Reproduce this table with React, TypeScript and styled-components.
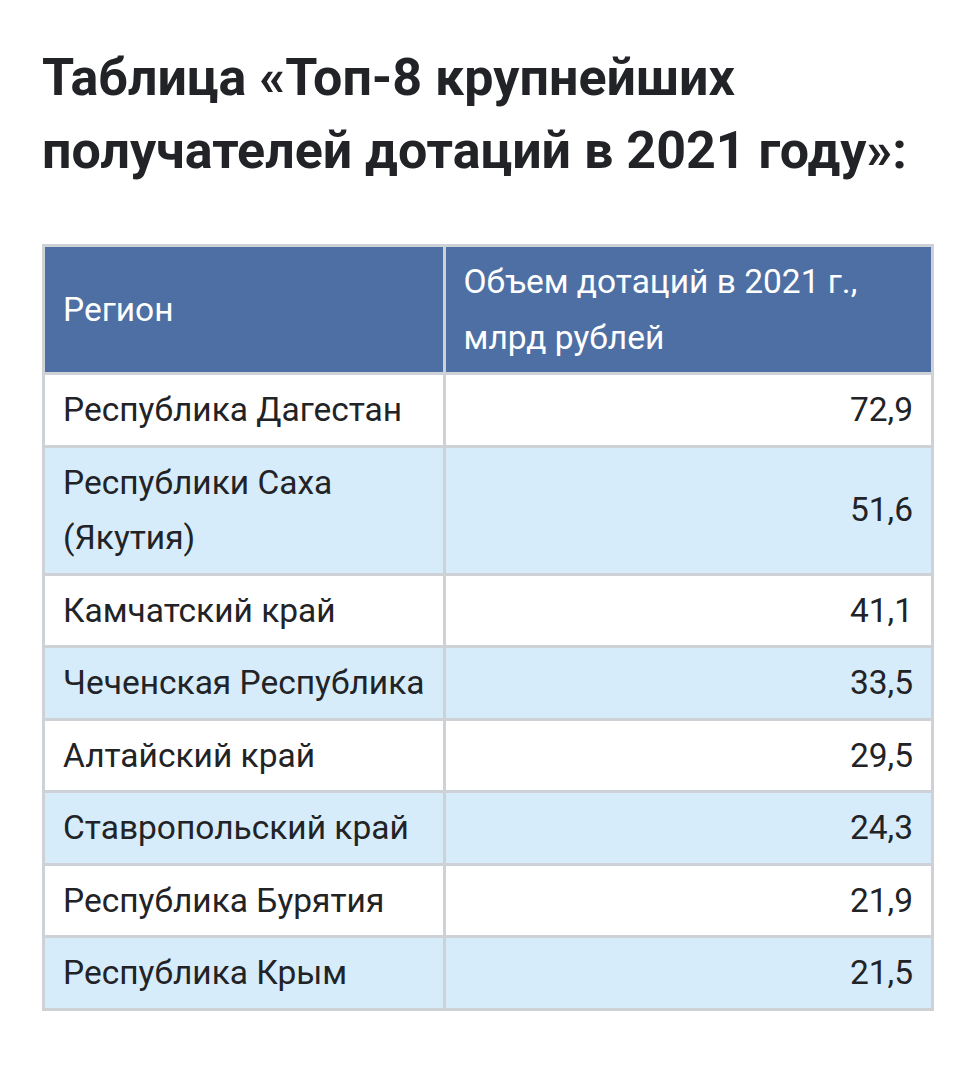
import React from "react";
import styled, { createGlobalStyle } from "styled-components";

const Global = createGlobalStyle`
  html, body { margin: 0; padding: 0; background: #ffffff; }
  body { font-family: Roboto, "Liberation Sans", sans-serif; color: #212121; }
`;

const Page = styled.main`
  padding: 41px 21px 40px 42px;
`;

const Title = styled.h1`
  margin: 0 0 57px 0;
  font-family: Roboto, "Liberation Sans", sans-serif;
  font-weight: 700;
  font-size: 52px;
  line-height: 73px;
  color: #222326;
`;

const Table = styled.table`
  width: 100%;
  border-collapse: collapse;
  border: 3px solid #ced2d7;
  font-size: 33.5px;
  line-height: 55.5px;
`;

const HeadCell = styled.th<{ $w?: string }>`
  background: #4e6fa4;
  color: #ffffff;
  font-weight: 400;
  text-align: left;
  padding: 7px 18px;
  border: 3px solid #ced2d7;
  width: ${(p) => p.$w || "auto"};
  vertical-align: middle;
`;

const Row = styled.tr<{ $striped: boolean }>`
  background: ${(p) => (p.$striped ? "#d6ecfb" : "#ffffff")};
`;

const Cell = styled.td<{ $right?: boolean }>`
  padding: 7px 18px;
  border: 3px solid #ced2d7;
  color: #222326;
  white-space: nowrap;
  text-align: ${(p) => (p.$right ? "right" : "left")};
  vertical-align: middle;
`;

const data: [string, string][] = [
  ["Республика Дагестан", "72,9"],
  ["Республики Саха (Якутия)", "51,6"],
  ["Камчатский край", "41,1"],
  ["Чеченская Республика", "33,5"],
  ["Алтайский край", "29,5"],
  ["Ставропольский край", "24,3"],
  ["Республика Бурятия", "21,9"],
  ["Республика Крым", "21,5"],
];

export default function App() {
  return (
    <>
      <Global />
      <Page>
        <Title>
          Таблица «Топ-8 крупнейших
          <br />
          получателей дотаций в 2021 году»:
        </Title>
        <Table>
          <thead>
            <tr>
              <HeadCell $w="45%">Регион</HeadCell>
              <HeadCell>
                Объем дотаций в 2021 г.,
                <br />
                млрд рублей
              </HeadCell>
            </tr>
          </thead>
          <tbody>
            {data.map(([region, value], i) => (
              <Row key={region} $striped={i % 2 === 1}>
                <Cell>
                  {region === "Республики Саха (Якутия)" ? (
                    <>
                      Республики Саха
                      <br />
                      (Якутия)
                    </>
                  ) : (
                    region
                  )}
                </Cell>
                <Cell $right>{value}</Cell>
              </Row>
            ))}
          </tbody>
        </Table>
      </Page>
    </>
  );
}
